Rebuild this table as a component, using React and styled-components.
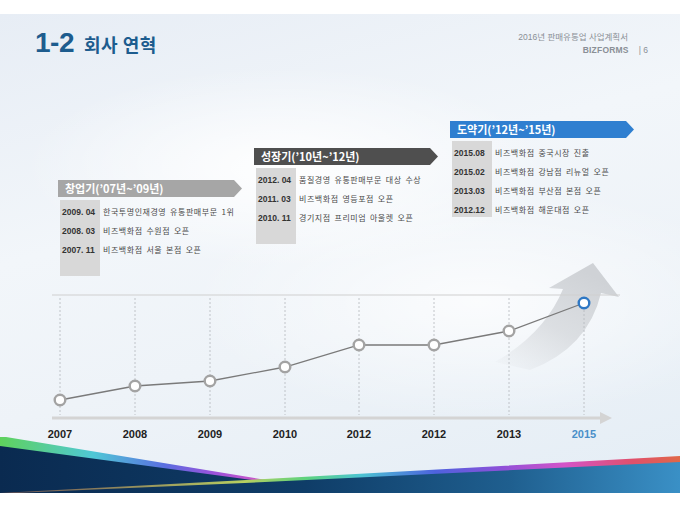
import styled, { createGlobalStyle } from "styled-components";

const GlobalStyle = createGlobalStyle`
    html, body {
        margin: 0;
        padding: 0;
        background: #fff;
    }
`

const groups = [
    {
        title: "창업기(’07년~’09년)",
        color: "#a6a6a6",
        offset: 59,
        rows: [
            ["2009. 04", "한국투명인재경영 유통판매부문 1위"],
            ["2008. 03", "비즈백화점 수원점 오픈"],
            ["2007. 11", "비즈백화점 서울 본점 오픈"],
        ],
    },
    {
        title: "성장기(’10년~’12년)",
        color: "#4f4f4f",
        offset: 27,
        rows: [
            ["2012. 04", "품질경영 유통판매부문 대상 수상"],
            ["2011. 03", "비즈백화점 영등포점 오픈"],
            ["2010. 11", "경기지점 프리미엄 아울렛 오픈"],
        ],
    },
    {
        title: "도약기(’12년~’15년)",
        color: "#2f7fd0",
        offset: 0,
        rows: [
            ["2015.08", "비즈백화점 중국시장 진출"],
            ["2015.02", "비즈백화점 강남점 리뉴얼 오픈"],
            ["2013.03", "비즈백화점 부산점 본점 오픈"],
            ["2012.12", "비즈백화점 해운대점 오픈"],
        ],
    },
]

const points = [
    { x: 60, y: 400, year: "2007" },
    { x: 135, y: 386, year: "2008" },
    { x: 210, y: 381, year: "2009" },
    { x: 285, y: 367, year: "2010" },
    { x: 359, y: 345, year: "2012" },
    { x: 434, y: 345, year: "2012" },
    { x: 509, y: 331, year: "2013" },
    { x: 584, y: 303, year: "2015", active: true },
]

const Page = styled.div`
    width: 680px;
    height: 510px;
    padding-top: 14px;
    box-sizing: border-box;
    background: #fff;
`
const Slide = styled.div`
    height: 479px;
    display: flex;
    flex-direction: column;
    overflow: hidden;
    background:
        radial-gradient(ellipse 55% 30% at 42% 32%, rgba(255,255,255,0.95), rgba(255,255,255,0) 70%),
        radial-gradient(ellipse 60% 35% at 70% 60%, rgba(255,255,255,0.75), rgba(255,255,255,0) 70%),
        linear-gradient(165deg, #e7edf5 0%, #f2f6fa 38%, #eef3f8 62%, #e4edf5 100%);
`
const Header = styled.header`
    height: 60px;
    box-sizing: border-box;
    padding: 15px 32px 0 35px;
    display: flex;
    justify-content: space-between;
    align-items: flex-start;
`
const Title = styled.h1`
    margin: 0;
    display: flex;
    align-items: baseline;
    gap: 10px;
    line-height: 28px;
    color: #1d5c8e;
`
const TitleNum = styled.span`
    font-family: "Liberation Sans", Arial, sans-serif;
    font-size: 28px;
    font-weight: 700;
    letter-spacing: -0.5px;
`
const TitleText = styled.span`
    font-family: "Noto Sans CJK KR", sans-serif;
    font-size: 18px;
    font-weight: 700;
    letter-spacing: 0.5px;
`
const Meta = styled.div`
    margin-top: 2px;
    display: flex;
    flex-direction: column;
    align-items: flex-end;
    font-family: "Liberation Sans", "Noto Sans CJK KR", sans-serif;
    font-size: 8.5px;
    line-height: 13px;
    color: #8a8f96;
`
const MetaLine = styled.div`
    display: flex;
    gap: 10px;
    margin-right: ${p => p.$indent || 0}px;
`
const Brand = styled.span`
    font-weight: 700;
    letter-spacing: 0.2px;
`

const Groups = styled.div`
    display: flex;
    align-items: flex-start;
    gap: 12px;
    padding: 47px 0 0 58px;
`
const Group = styled.div`
    width: 184px;
    margin-top: ${p => p.$offset}px;
    display: flex;
    flex-direction: column;
    gap: 3px;
`
const GroupHead = styled.div`
    height: 17px;
    line-height: 17px;
    padding-left: 7px;
    background: ${p => p.$color};
    clip-path: polygon(0 0, calc(100% - 8px) 0, 100% 50%, calc(100% - 8px) 100%, 0 100%);
    color: #fff;
    font-family: "Noto Sans CJK KR", sans-serif;
    font-size: 11px;
    font-weight: 700;
`
const GroupBody = styled.div`
    height: 76px;
    margin-left: 2px;
    padding-top: 2px;
    box-sizing: border-box;
    background: linear-gradient(to right, #d8d8d8 40px, transparent 40px);
`
const Row = styled.div`
    height: 19px;
    display: flex;
    align-items: center;
    white-space: nowrap;
`
const Date = styled.span`
    width: 40px;
    padding-left: 2px;
    box-sizing: border-box;
    font-family: "Liberation Sans", Arial, sans-serif;
    font-size: 8.5px;
    font-weight: 700;
    color: #333;
`
const Desc = styled.span`
    padding-left: 3px;
    font-family: "Noto Sans CJK KR", sans-serif;
    font-size: 8px;
    letter-spacing: 0.55px;
    word-spacing: 1.5px;
    color: #4a4a4a;
`

const Chart = styled.svg`
    display: block;
    margin-top: -18px;
    flex-shrink: 0;
`
const Wave = styled.svg`
    display: block;
    margin-top: -3px;
    flex-shrink: 0;
`

const TimelineChart = () => (
    <Chart width="680" height="182" viewBox="0 258 680 182">
        <defs>
            <linearGradient id="bigArrow" x1="0" y1="1" x2="0.6" y2="0">
                <stop offset="0" stopColor="#d3d6da" stopOpacity="0" />
                <stop offset="0.5" stopColor="#d3d6da" stopOpacity="0.75" />
                <stop offset="1" stopColor="#cfd2d6" stopOpacity="1" />
            </linearGradient>
        </defs>
        <path
            d="M 495 362 Q 545 333 563 289 L 549 288 L 593 263 L 619 297 L 601 293 Q 588 348 530 370 Z"
            fill="url(#bigArrow)"
        />
        <line x1="52" y1="295" x2="620" y2="295" stroke="#cfcfcf" strokeWidth="1.2" />
        {points.map((p, i) => (
            <line key={i} x1={p.x} y1="298" x2={p.x} y2="415" stroke="#b4b8bc" strokeWidth="0.8" strokeDasharray="2 2" />
        ))}
        <rect x="52" y="416.5" width="552" height="3" fill="#d4d4d4" />
        <polygon points="600,412 612,418 600,424" fill="#d4d4d4" />
        <polyline
            points={points.map(p => `${p.x},${p.y}`).join(" ")}
            fill="none"
            stroke="#7a7a7a"
            strokeWidth="1.3"
        />
        {points.map((p, i) => (
            <circle
                key={i}
                cx={p.x}
                cy={p.y}
                r="5.3"
                fill="#fff"
                stroke={p.active ? "#2f78c4" : "#a3a3a3"}
                strokeWidth="2.4"
            />
        ))}
        {points.map((p, i) => (
            <text
                key={i}
                x={p.x}
                y="438"
                textAnchor="middle"
                fontFamily="Liberation Sans, Arial, sans-serif"
                fontSize="11"
                fontWeight="700"
                fill={p.active ? "#4a8fc9" : "#222"}
            >
                {p.year}
            </text>
        ))}
    </Chart>
)

const BottomWave = () => (
    <Wave width="680" height="56" viewBox="0 437 680 56">
        <defs>
            <linearGradient id="stripeA" x1="0" y1="0" x2="1" y2="0">
                <stop offset="0" stopColor="#5fd25c" />
                <stop offset="0.35" stopColor="#4fc8d6" />
                <stop offset="0.62" stopColor="#5a6ee0" />
                <stop offset="0.8" stopColor="#9a52da" />
                <stop offset="1" stopColor="#d456c6" />
            </linearGradient>
            <linearGradient id="stripeB" x1="0" y1="0" x2="1" y2="0">
                <stop offset="0" stopColor="#b0705a" stopOpacity="0.6" />
                <stop offset="0.36" stopColor="#b8d060" />
                <stop offset="0.45" stopColor="#5cd27e" />
                <stop offset="0.53" stopColor="#4cc4d2" />
                <stop offset="0.64" stopColor="#4d62de" />
                <stop offset="0.74" stopColor="#9050d8" />
                <stop offset="0.83" stopColor="#d454c8" />
                <stop offset="0.93" stopColor="#e0506c" />
                <stop offset="1" stopColor="#e06848" />
            </linearGradient>
            <linearGradient id="navy" x1="0" y1="0" x2="1" y2="0">
                <stop offset="0" stopColor="#0a2a50" />
                <stop offset="0.45" stopColor="#0f3d68" />
                <stop offset="0.75" stopColor="#1f5f8f" />
                <stop offset="1" stopColor="#3a90c6" />
            </linearGradient>
        </defs>
        <polygon points="0,445 262,480 680,460 680,493 0,493" fill="url(#navy)" />
        <polygon points="0,436 266,480 252,480 0,446" fill="url(#stripeA)" />
        <polygon points="0,493 265,479 680,456 680,462 265,482 0,493.6" fill="url(#stripeB)" />
    </Wave>
)

const App = () => {
    return (
        <Page>
            <GlobalStyle />
            <Slide>
                <Header>
                    <Title>
                        <TitleNum>1-2</TitleNum>
                        <TitleText>회사 연혁</TitleText>
                    </Title>
                    <Meta>
                        <MetaLine $indent={20}>2016년 판매유통업 사업계획서</MetaLine>
                        <MetaLine>
                            <Brand>BIZFORMS</Brand>
                            <span>| 6</span>
                        </MetaLine>
                    </Meta>
                </Header>
                <Groups>
                    {groups.map((g, i) => (
                        <Group key={i} $offset={g.offset}>
                            <GroupHead $color={g.color}>{g.title}</GroupHead>
                            <GroupBody>
                                {g.rows.map(([date, text], j) => (
                                    <Row key={j}>
                                        <Date>{date}</Date>
                                        <Desc>{text}</Desc>
                                    </Row>
                                ))}
                            </GroupBody>
                        </Group>
                    ))}
                </Groups>
                <TimelineChart />
                <BottomWave />
            </Slide>
        </Page>
    );
}

export default App;
